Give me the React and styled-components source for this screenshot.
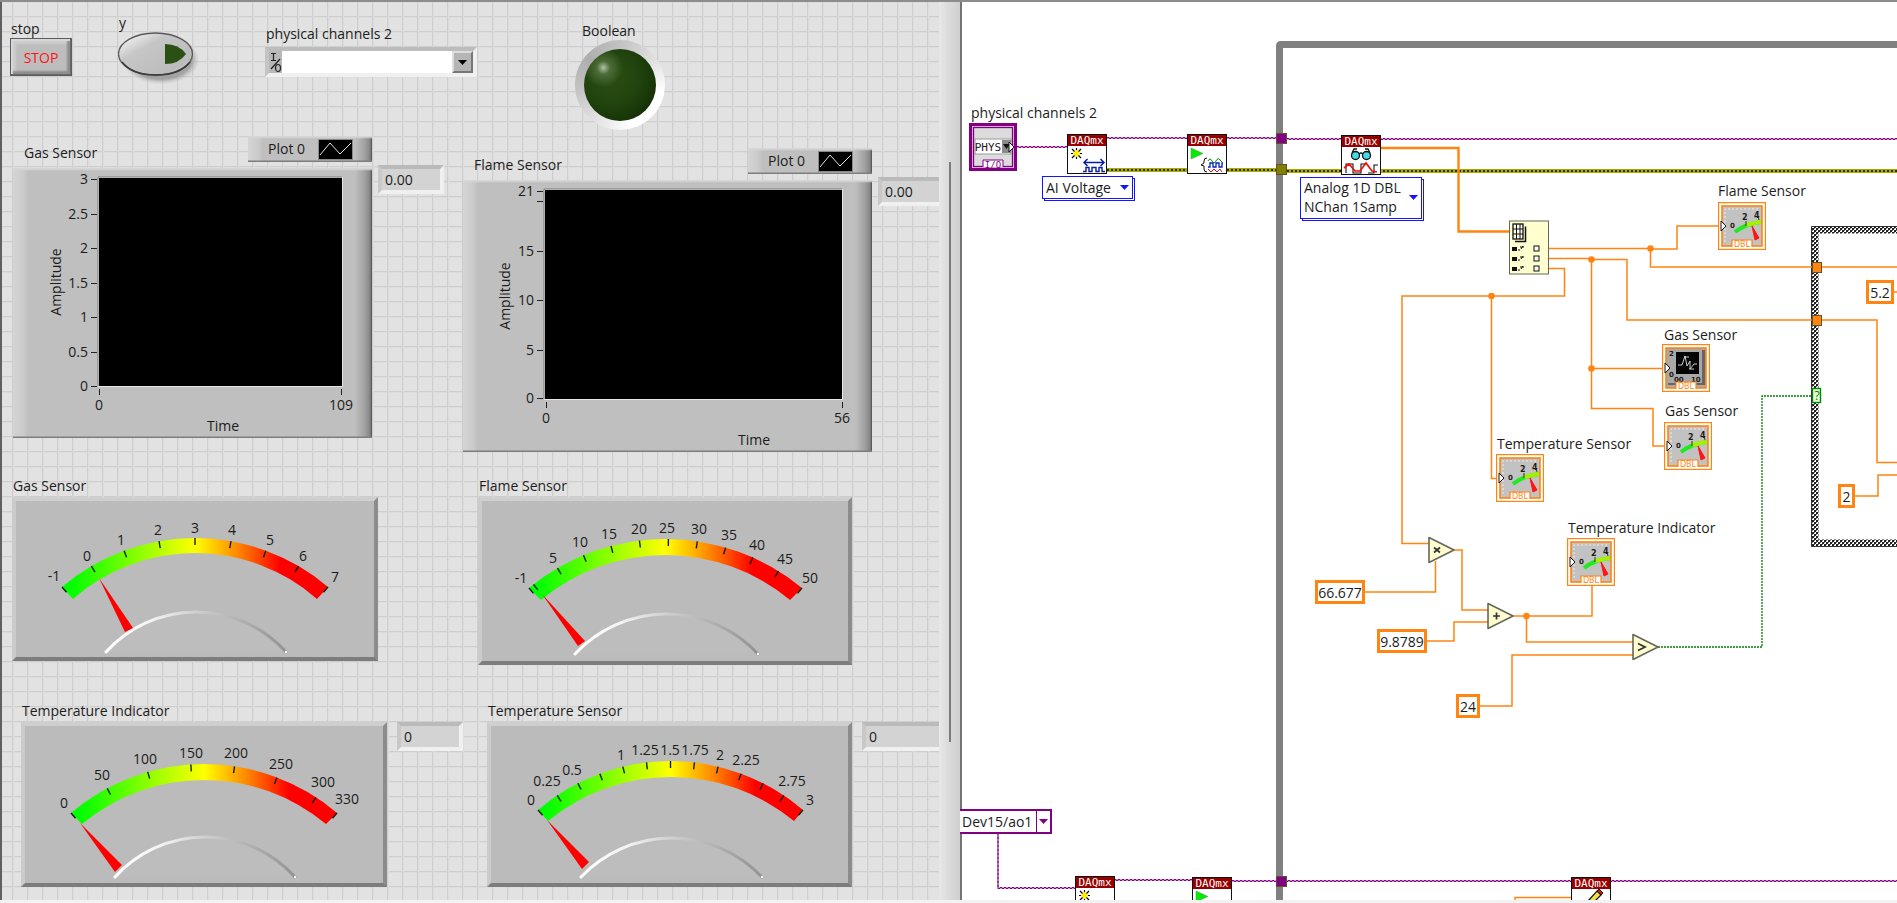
import React from "react";
import styled, { createGlobalStyle } from "styled-components";

const FONT = '"Open Sans", "Noto Sans", sans-serif';
const ORANGE = "#ff8410";
const PURPLE = "#820082";
const INK = "#1c1c1c";

const GlobalStyle = createGlobalStyle`
  *, *::before, *::after { box-sizing: border-box; }
  body {
    margin: 0;
    background: #fff;
    color: ${INK};
    font-family: ${FONT};
    font-size: 14px;
    line-height: 18px;
  }
  button, input, select { font: inherit; color: inherit; margin: 0; }
  svg { display: block; }
  svg text { font-family: ${FONT}; font-size: 14px; fill: ${INK}; }
`;

/* ---------- window frame ---------- */

const Workspace = styled.main`
  position: relative;
  display: grid;
  grid-template-columns: minmax(0, 960fr) minmax(0, 937fr);
  min-height: 100vh;
  overflow: hidden;

  &::before,
  &::after {
    content: "";
    position: absolute;
    left: 0;
    right: 0;
    z-index: 2;
  }
  &::before { top: 0; height: 2px; background: #8c8c8c; }
  &::after { bottom: 0; height: 3px; background: #f2f2f2; }
`;

const FrontPanel = styled.section`
  display: grid;
  grid-template-columns: minmax(0, 1fr) 21px;
  border-left: 2px solid #606060;
  min-width: 0;
`;

const PanelCanvas = styled.div`
  display: grid;
  grid-template-columns: 461px minmax(0, 1fr);
  grid-template-rows: 136px 341px 225px auto;
  overflow: hidden;
  background-color: #e2e2e2;
  background-image:
    linear-gradient(to right, #cecece 1px, #dddddd 1px, #dddddd 2px, transparent 2px),
    linear-gradient(to bottom, #cecece 1px, #dddddd 1px, #dddddd 2px, transparent 2px);
  background-size: 15px 15px;
  background-position: 10px 1px;
`;

const ScrollTrack = styled.div`
  display: flex;
  justify-content: center;
  padding-top: 162px;
  background: linear-gradient(to right, #e8e8e8, #dcdcdc 40%, #cfcfcf);
`;

const ScrollThumb = styled.div`
  width: 2px;
  height: 580px;
  background: #7b7b7b;
`;

/* ---------- front panel controls ---------- */

const Caption = styled.label`
  display: block;
  padding-left: 1px;
  line-height: 18px;
  white-space: nowrap;
`;

const ControlRow = styled.div`
  grid-column: 1 / -1;
  display: grid;
  grid-template-columns: 108px 147px 310px minmax(0, 1fr);
  padding-left: 8px;
`;

const Field = styled.div`
  display: flex;
  flex-direction: column;
  align-items: flex-start;
  padding-top: ${(p) => p.$top}px;
  gap: ${(p) => p.$gap || 0}px;
`;

const StopButton = styled.button`
  width: 62px;
  height: 38px;
  padding: 1px 0 0;
  border: 1px solid #5c5c5c;
  background: #bdbdbd;
  color: #ff1414;
  box-shadow:
    inset -1px -1px 0 #6a6a6a,
    inset 2px 2px 1px #d8d8d8,
    inset -4px -4px 2px #8d8d8d,
    inset 5px 5px 2px #cdcdcd;
`;

const OvalButton = styled.button`
  padding: 0;
  border: 0;
  background: none;
`;

const ChannelBox = styled.div`
  display: grid;
  grid-template-columns: 13px 191px;
  width: 212px;
  height: 30px;
  border-style: solid;
  border-width: 4px;
  border-color: #bcbcbc #f0f0f0 #f0f0f0 #c4c4c4;
  background: #b8b8b8;
`;

const SelectWrap = styled.div`
  position: relative;
  display: grid;
`;

const ChannelSelect = styled.select`
  appearance: none;
  border: 0;
  border-radius: 0;
  background: #fff;
  width: 100%;
  padding: 0 22px 0 4px;
`;

const DropMark = styled.span`
  position: absolute;
  top: 0;
  right: 0;
  bottom: 0;
  width: 21px;
  display: grid;
  place-items: center;
  background: #b5b5b5;
  border: 2px solid;
  border-color: #dedede #767676 #767676 #dedede;
  pointer-events: none;
`;

const LedCaption = styled(Caption)`
  padding-left: 7px;
`;

const Led = styled.div`
  width: 90px;
  height: 90px;
  padding: 9px;
  border-radius: 50%;
  background: conic-gradient(
    from 0deg,
    #c2c2c2 0deg,
    #dedede 50deg,
    #ffffff 100deg,
    #ffffff 165deg,
    #e2e2e2 215deg,
    #c0c0c0 270deg,
    #aeaeae 310deg,
    #c2c2c2 360deg
  );
`;

const LedLens = styled.div`
  height: 100%;
  border-radius: 50%;
  background:
    radial-gradient(circle at 27% 26%, rgba(200, 215, 190, 0.85) 0, rgba(120, 150, 100, 0.45) 9%, transparent 26%),
    radial-gradient(circle at 38% 40%, #2b4d14 0, #22450f 40%, #193808 66%, #0a1803 100%);
`;

/* ---------- charts and meters ---------- */

const Cell = styled.div`
  display: flex;
  align-items: flex-start;
  gap: ${(p) => p.$gap}px;
  padding-top: ${(p) => p.$top || 0}px;
  padding-left: ${(p) => p.$indent || 0}px;
`;

const Stack = styled.div`
  flex: none;
  display: flex;
  flex-direction: column;
`;

const ChartHeader = styled.div`
  display: flex;
  justify-content: space-between;
  align-items: flex-end;
  padding: 0 0 6px 10px;
`;

const bevelPlate = `
  background:
    linear-gradient(to top, #7d7d7d 1px, transparent 2px),
    linear-gradient(to bottom, #d6d6d6 1px, transparent 3px),
    linear-gradient(to right, #d4d4d4 0, #cbcbcb 10px, transparent 15px),
    linear-gradient(to left, #4e4e4e 0, #858585 2px, #a0a0a0 7px, transparent 17px),
    #bfbfbf;
`;

const Legend = styled.div`
  display: flex;
  align-items: center;
  gap: 13px;
  width: 124px;
  height: 26px;
  padding-left: 20px;
  ${bevelPlate}
`;

const ChartPlate = styled.figure`
  margin: 0;
  ${bevelPlate}
`;

const MeterPlate = styled.figure`
  margin: 2px 0 0;
  background: #bbb;
  border: 4px solid;
  border-color: #cfcfcf #8c8c8c #7d7d7d #cbcbcb;
  svg { margin: -4px; }
`;

const ReadoutColumn = styled.div`
  flex: none;
  padding-top: ${(p) => p.$top}px;
`;

const Readout = styled.output`
  display: block;
  width: ${(p) => p.$width || 66}px;
  height: 29px;
  padding: 2px 3px;
  border: 4px solid;
  border-color: #bababa #f0f0f0 #f0f0f0 #c8c8c8;
  background: #d3d3d3;
`;

function PlotLegend() {
  return (
    <Legend>
      <span>Plot 0</span>
      <svg width="35" height="21" aria-hidden="true">
        <rect width="35" height="21" fill="#8a8a8a" />
        <rect x="1" y="1" width="33" height="19" fill="#000" />
        <path d="M2 16L12 4L22 15L33 4" fill="none" stroke="#e4e4e4" strokeWidth="1" />
      </svg>
    </Legend>
  );
}

function Chart({ width, height, plot, yTicks, xTicks, amplitude, time }) {
  const [x0, y0, x1, y1] = plot;
  return (
    <svg width={width} height={height}>
      <rect x={x0 - 1} y={y0 - 1} width={x1 - x0 + 2} height={y1 - y0 + 2} fill="#e6e6e6" />
      <path d={`M${x0 - 1} ${y1}V${y0 - 1}H${x1}`} fill="none" stroke="#7a7a7a" />
      <rect x={x0} y={y0} width={x1 - x0} height={y1 - y0} />
      {yTicks.map(([label, y]) => (
        <g key={y}>
          <path d={`M${x0 - 8} ${y + 0.5}h6`} stroke="#222" />
          <text x={x0 - 11} y={y + 5} textAnchor="end">{label}</text>
        </g>
      ))}
      {xTicks.map(([label, x]) => (
        <g key={x}>
          <path d={`M${x + 0.5} ${y1 + 3}v6`} stroke="#222" />
          <text x={x} y={y1 + 24} textAnchor="middle">{label}</text>
        </g>
      ))}
      <text textAnchor="middle" transform={`translate(${amplitude[0]} ${amplitude[1]}) rotate(-90)`}>
        Amplitude
      </text>
      <text x={time[0]} y={time[1]}>Time</text>
    </svg>
  );
}

function ChartBlock({ title, value, top, indent, readoutWidth, chart }) {
  return (
    <Cell $top={top} $indent={indent} $gap={6}>
      <Stack>
        <ChartHeader>
          <Caption as="span">{title}</Caption>
          <PlotLegend />
        </ChartHeader>
        <ChartPlate aria-label={`${title} chart`}>
          <Chart {...chart} />
        </ChartPlate>
      </Stack>
      <ReadoutColumn $top={29}>
        <Readout $width={readoutWidth}>{value}</Readout>
      </ReadoutColumn>
    </Cell>
  );
}

const arcRadius = (half, sag) => (half * half + sag * sag) / (2 * sag);

function arc([xl, xr, yEnd, yTop]) {
  return arcRadius((xr - xl) / 2, yEnd - yTop);
}

function Meter({ id, width, height, outer, inner, hub, needle, ticks, labels }) {
  const [xl, xr, yEnd, yTop] = outer;
  const R = arc(outer);
  const r = arc(inner);
  const h = arc(hub);
  const cx = (xl + xr) / 2;
  const cy = yTop + R;
  const span = Math.asin((xr - xl) / 2 / R);
  return (
    <svg width={width} height={height}>
      <defs>
        <linearGradient id={`${id}-scale`}>
          <stop offset="0.03" stopColor="#00ff00" />
          <stop offset="0.5" stopColor="#ffff00" />
          <stop offset="0.66" stopColor="#ff8800" />
          <stop offset="0.82" stopColor="#ff0000" />
        </linearGradient>
        <linearGradient id={`${id}-hub`}>
          <stop offset="0" stopColor="#ffffff" />
          <stop offset="0.25" stopColor="#f4f4f4" />
          <stop offset="0.5" stopColor="#cfcfcf" />
          <stop offset="1" stopColor="#929292" />
        </linearGradient>
      </defs>
      <path
        d={`M${xl} ${yEnd}A${R} ${R} 0 0 1 ${xr} ${yEnd}L${inner[1]} ${inner[2]}A${r} ${r} 0 0 0 ${inner[0]} ${inner[2]}Z`}
        fill={`url(#${id}-scale)`}
      />
      {ticks.map((f) => {
        const a = (f * 2 - 1) * span;
        const s = Math.sin(a);
        const c = Math.cos(a);
        return (
          <path
            key={f}
            d={`M${cx + R * s} ${cy - R * c}L${cx + (R - 7) * s} ${cy - (R - 7) * c}`}
            stroke="#10200c"
            strokeWidth="1.4"
          />
        );
      })}
      {labels.map(([text, x, y]) => (
        <text key={text} x={x} y={y + 5} textAnchor="middle">{text}</text>
      ))}
      <path
        d={`M${hub[0]} ${hub[2]}A${h} ${h} 0 0 1 ${hub[1]} ${hub[2]}`}
        fill="#bdbdbd"
        stroke={`url(#${id}-hub)`}
        strokeWidth="3"
        strokeLinecap="round"
      />
      <circle cx={hub[1]} cy={hub[2]} r="1.2" fill="#fff" />
      <polygon points={needle} fill="#ff0000" />
    </svg>
  );
}

function MeterBlock({ title, value, indent, readoutWidth, meter }) {
  return (
    <Cell $indent={indent} $gap={10}>
      <Stack>
        <Caption as="span">{title}</Caption>
        <MeterPlate aria-label={`${title} meter`}>
          <Meter {...meter} />
        </MeterPlate>
      </Stack>
      {value !== undefined && (
        <ReadoutColumn $top={20}>
          <Readout $width={readoutWidth}>{value}</Readout>
        </ReadoutColumn>
      )}
    </Cell>
  );
}

const gasChart = {
  width: 359, height: 270, plot: [86, 10, 329, 218],
  yTicks: [["3", 11], ["2.5", 46], ["2", 80], ["1.5", 115], ["1", 149], ["0.5", 184], ["0", 218]],
  xTicks: [["0", 86], ["109", 328]],
  amplitude: [48, 114], time: [194, 263],
};

const flameChart = {
  width: 409, height: 272, plot: [82, 10, 379, 219],
  yTicks: [["21", 11], ["", 21], ["15", 71], ["10", 120], ["5", 170], ["0", 218]],
  xTicks: [["0", 83], ["56", 379]],
  amplitude: [47, 116], time: [275, 265],
};

const gasMeter = {
  id: "gas", width: 366, height: 164,
  outer: [50, 316, 90, 41], inner: [61, 305, 102, 56], hub: [94, 274, 155, 115],
  needle: "87,81 113,135 121,131",
  ticks: [0, 1, 2, 3, 4, 5, 6, 7, 8].map((n) => n / 8),
  labels: [["-1", 42, 79], ["0", 75, 59], ["1", 109, 43], ["2", 146, 33], ["3", 183, 31], ["4", 220, 33], ["5", 258, 43], ["6", 291, 59], ["7", 323, 80]],
};

const flameMeter = {
  id: "flame", width: 374, height: 168,
  outer: [51, 324, 91, 42], inner: [63, 312, 103, 58], hub: [97, 280, 157, 117],
  needle: "64,97 100,149 107,144",
  ticks: [-1, 0, 5, 10, 15, 20, 25, 30, 35, 40, 45, 50].map((v) => (v + 1) / 51),
  labels: [["-1", 43, 81], ["5", 75, 61], ["10", 102, 45], ["15", 131, 37], ["20", 161, 32], ["25", 189, 31], ["30", 221, 32], ["35", 251, 38], ["40", 279, 48], ["45", 307, 62], ["50", 332, 81]],
};

const indicatorMeter = {
  id: "indicator", width: 366, height: 165,
  outer: [50, 316, 91, 42], inner: [61, 305, 102, 58], hub: [94, 274, 155, 115],
  needle: "59,101 94,150 101,143",
  ticks: [0, 50, 100, 150, 200, 250, 300, 330].map((v) => v / 330),
  labels: [["0", 43, 81], ["50", 81, 53], ["100", 124, 37], ["150", 170, 31], ["200", 215, 31], ["250", 260, 42], ["300", 302, 60], ["330", 326, 77]],
};

const temperatureMeter = {
  id: "temperature", width: 365, height: 165,
  outer: [51, 316, 88, 39], inner: [61, 307, 99, 55], hub: [94, 275, 155, 116],
  needle: "60,98 95,147 102,140",
  ticks: [0, 1, 2, 3, 4, 5, 6, 7, 8, 9, 10, 11, 12].map((n) => n / 12),
  labels: [["0", 44, 78], ["0.25", 60, 59], ["0.5", 85, 48], ["1", 134, 33], ["1.25", 158, 28], ["1.5", 183, 28], ["1.75", 208, 28], ["2", 233, 33], ["2.25", 259, 38], ["2.75", 305, 59], ["3", 323, 78]],
};

/* ---------- block diagram ---------- */

const Diagram = styled.section`
  position: relative;
  overflow: hidden;
  min-width: 0;
  min-height: 100%;
  background: #fff;
  box-shadow: inset 2px 0 0 #747474;
`;

const Wires = styled.svg`
  position: absolute;
  inset: 0;
  width: 100%;
  height: 100%;
`;

const Node = styled.div`
  position: absolute;
  left: ${(p) => p.$x}px;
  top: ${(p) => p.$y}px;
  white-space: nowrap;
`;

const Constant = styled.input`
  display: block;
  width: ${(p) => p.$width}px;
  height: 24px;
  padding: 0;
  border: 3px solid ${ORANGE};
  background: #fff;
  text-align: center;
`;

const PolySelector = styled.div`
  position: relative;
  border: 1px solid #1414ff;
  background: #fff;
  box-shadow: 2px 2px 0 -1px #fff, 2px 2px 0 #1414ff;
`;

const PolySelect = styled.select`
  display: block;
  appearance: none;
  border: 0;
  border-radius: 0;
  background: none;
  width: 89px;
  height: 21px;
  padding: 0 18px 0 3px;
`;

const PolyButton = styled.button`
  display: block;
  border: 0;
  background: none;
  width: 120px;
  height: 40px;
  padding: 0 20px 2px 3px;
  line-height: 19px;
  text-align: left;
  white-space: pre-line;
`;

const Mark = styled.svg`
  position: absolute;
  right: 3px;
  top: calc(50% - 3px);
  pointer-events: none;
`;

const DeviceBox = styled.div`
  display: grid;
  grid-template-columns: 77px 13px;
  height: 25px;
  border: 2px solid ${PURPLE};
  border-left: 0;
  background: #fff;
`;

const DeviceSelect = styled.select`
  appearance: none;
  border: 0;
  border-radius: 0;
  border-right: 1px solid ${PURPLE};
  background: none;
  padding: 0 0 0 2px;
`;

const DeviceMark = styled.span`
  display: grid;
  place-items: center;
`;

function DownMark({ color }) {
  return (
    <svg width="9" height="5" viewBox="0 0 9 5" aria-hidden="true">
      <path d="M0 0H9L4.5 5Z" fill={color} />
    </svg>
  );
}

const mono = { fontFamily: '"DejaVu Sans Mono", monospace', fontSize: 11 };

const glyphs = {
  create: (
    <>
      <path d="M9.500 14v11M4 19.500h11M5 15l9 9M14 15l-9 9" stroke="#000" strokeWidth="1.200" />
      <circle cx="9.500" cy="19.500" r="2.800" fill="#ffee00" />
      <path d="M9.500 16v7M6 19.500h7" stroke="#ffee00" strokeWidth="1.500" />
      <path d="M18 28.500h18M20.500 25l-3.500 3.500l3.500 3.500M33.500 25l3.500 3.500l-3.500 3.500" stroke="#0a1fa0" strokeWidth="1.500" fill="none" />
      <path d="M16 37.500h3v-4h3v4h3v-4h4v4h3v-4h3v4h3" stroke="#0a1fa0" strokeWidth="1.400" fill="none" />
    </>
  ),
  start: (
    <>
      <path d="M4 14L16 19.500L4 25Z" fill="#00ee00" stroke="#5a9a5a" strokeWidth="0.600" />
      <path d="M20 24q-3 0-3 3v2l-3 2l3 1v3q0 3 3 3" stroke="#111" fill="none" />
      <path d="M21 27q2-4 4 0t4 0t4-1l2 2" stroke="#0a8a0a" fill="none" />
      <path d="M21 33h2v-4h3v4h3v-4h3v4h3v-4h1" stroke="#0a1fc0" strokeWidth="1.300" fill="none" />
      <path d="M21 35l3 3l3-3l3 3l3-3l2 3" stroke="#e01010" fill="none" />
    </>
  ),
  read: (
    <>
      <path d="M11 18l2-4h3M29 18l-2-4h-3M18 19q2-2 4 0" stroke="#111" strokeWidth="1.300" fill="none" />
      <circle cx="14.500" cy="20.500" r="4" fill="#43d9e6" stroke="#111" strokeWidth="1.300" />
      <circle cx="25.500" cy="20.500" r="4" fill="#43d9e6" stroke="#111" strokeWidth="1.300" />
      <path d="M5 38V29h7v9h8v-9h5M27 38h6v-8h4" stroke="#111" strokeWidth="1.100" fill="none" />
      <path d="M3 33l5-4l6 7h5l6-8l6 8l5 1" stroke="#f01010" strokeWidth="1.700" fill="none" />
    </>
  ),
  write: (
    <>
      <path d="M17 24l9-10l4 4l-9 9l-5 3Z" fill="#f4e04a" stroke="#111" strokeWidth="1.200" />
      <path d="M26 14l2-2l4 4l-2 2Z" fill="#d01515" stroke="#111" />
      <path d="M16 30l1-5l4 2Z" fill="#111" />
    </>
  ),
};

function DaqNode({ x, y, kind }) {
  return (
    <Node $x={x} $y={y}>
      <svg width="40" height="40" aria-label={`DAQmx ${kind}`} role="img">
        <rect x="0.500" y="0.500" width="39" height="39" fill="#fff" stroke="#111" />
        <rect x="1" y="1" width="38" height="11" fill="#960000" />
        <text x="20" y="10" textAnchor="middle" style={{ ...mono, fill: "#fff" }}>
          DAQmx
        </text>
        {glyphs[kind]}
      </svg>
    </Node>
  );
}

const tiny = { fontFamily: '"DejaVu Sans", sans-serif', fontSize: 7, fontWeight: 700 };
const small = { ...tiny, fontSize: 8 };

function DblTerminal({ x, y, chart }) {
  return (
    <Node $x={x} $y={y}>
      <svg width="48" height="48" aria-hidden="true">
        <rect x="0.500" y="0.500" width="47" height="47" fill="#fff" stroke={ORANGE} strokeWidth="1.400" />
        <rect x="4" y="4" width="40" height="40" fill={chart ? "#a9a9a9" : "#c2c2c2"} stroke={ORANGE} strokeWidth="1.600" />
        {chart ? (
          <>
            <path d="M40 6h3v35H6v-2h34Z" fill="#666" />
            <rect x="14" y="8" width="23" height="22" fill="#050505" />
            <path d="M16 21h4l3-9l2 10l3-5v8l4-5h3M22 13h5M27 25h5" stroke="#ddd" fill="none" strokeWidth="0.900" />
            <text x="7" y="12" style={tiny}>2</text>
            <text x="7" y="33" style={tiny}>0</text>
            <text x="12" y="38" style={tiny}>00</text>
            <text x="29" y="38" style={tiny}>10</text>
          </>
        ) : (
          <>
            <path d="M7 40V7H42" stroke="#eee" strokeDasharray="2 2" fill="none" />
            <path d="M17 30q10-8 26-10" stroke="#1eea1e" strokeWidth="4" fill="none" />
            <path d="M28 23q7-2 15-3" stroke="#a5f200" strokeWidth="4" fill="none" />
            <path d="M34 24l7 12l-4 2Z" fill="#ff1414" stroke="#ff1414" />
            <path d="M28 19v5M40 14l1 4" stroke="#333" />
            <text x="12" y="26" style={tiny}>0</text>
            <text x="24" y="18" style={small}>2</text>
            <text x="36" y="16" style={small}>4</text>
          </>
        )}
        <path d="M3 19v10l5-5Z" fill="#fff" stroke="#111" />
        <path d="M14 45V38H34V45" fill="#fff" stroke={ORANGE} strokeWidth="1.200" />
        <text x="24" y="45" textAnchor="middle" style={{ ...small, fontWeight: 400, fill: ORANGE }}>DBL</text>
      </svg>
    </Node>
  );
}

function PhysTerminal({ x, y }) {
  return (
    <Node $x={x} $y={y}>
      <svg width="48" height="48" aria-hidden="true">
        <rect x="1.500" y="1.500" width="45" height="45" fill="#e2c8e2" stroke={PURPLE} strokeWidth="3" />
        <rect x="4.500" y="4.500" width="39" height="39" fill="#dcdcdc" stroke={PURPLE} strokeWidth="1.300" />
        <rect x="6" y="16" width="36" height="15" fill="#fff" stroke="#999" />
        <rect x="33" y="17" width="9" height="13" fill="#8b8b8b" />
        <path d="M34 21h7l-3.500 5Z" fill="#111" />
        <text x="19" y="28" textAnchor="middle" style={mono}>PHYS</text>
        <path d="M40 19v10l5-5Z" fill="#fff" stroke="#111" />
        <path d="M14 44V37H34V44" fill="#fff" stroke={PURPLE} />
        <text x="24" y="45" textAnchor="middle" style={{ ...mono, fontSize: 9, fill: PURPLE }}>I/O</text>
      </svg>
    </Node>
  );
}

function TaskWire({ d }) {
  return (
    <g fill="none" stroke={PURPLE} strokeWidth="1">
      <path d={d} strokeWidth="2" strokeOpacity="0.4" />
      <path d={d} strokeDasharray="2 2" transform="translate(0 -0.5)" />
      <path d={d} strokeDasharray="2 2" strokeDashoffset="2" transform="translate(0 0.5)" />
    </g>
  );
}

function ErrorWire({ d }) {
  return (
    <g fill="none">
      <path d={d} stroke="#adad00" strokeWidth="4" />
      <path d={d} stroke="#2e2e00" strokeWidth="2" strokeDasharray="2 2" />
    </g>
  );
}

const dataWires = [
  "M588 248.500H690.500V249H717V226H758",
  "M690.500 248.500V267H852M862 267H2400",
  "M588 258.500H631.500V259.500H667V320H852M862 320H917V462.500H2400",
  "M631.500 259.500V408.500H693V446H704",
  "M631.500 368.500H703",
  "M588 268.500H604.500V296H442V543.500H469",
  "M531.500 296V478.500H537",
  "M494 550H502V610H528",
  "M405 592H475.500V561",
  "M467 641H494V622H528",
  "M553 616H632V585",
  "M566.500 616V642H673",
  "M520 706H552V655H673",
  "M934 292H2400",
  "M895 496H918V475H2400",
  "M555 903V897.500H611",
];

const junctions = [[690.5, 248.5], [631.5, 259.5], [631.5, 368.5], [531.5, 296], [566.5, 616]];

function Operator({ x, y, children }) {
  return (
    <g transform={`translate(${x} ${y})`}>
      <path d="M1 0.500L26 13L1 25.500Z" fill="#ffffd0" stroke="#66665a" strokeWidth="1.600" strokeLinejoin="round" />
      {children}
    </g>
  );
}

function WireLayer() {
  return (
    <Wires aria-hidden="true">
      <defs>
        <pattern id="case-hatch" width="4" height="4" patternUnits="userSpaceOnUse">
          <rect width="4" height="4" fill="#fff" />
          <path d="M0 0h2v2h-2zM2 2h2v2h-2z" fill="#222" />
          <path d="M2 0h1v1h-1zM0 2h1v1h-1z" fill="#777" />
        </pattern>
      </defs>

      <path d="M319.500 4000V46Q319.500 44.500 321 44.500H2400" fill="none" stroke="#808080" strokeWidth="7" />

      <path d="M2400 230H855V543H2400" fill="none" stroke="url(#case-hatch)" strokeWidth="7" />
      <path d="M2400 226.500H851.500V546.500H2400" fill="none" stroke="#333" strokeWidth="1" />

      <TaskWire d="M57 147H108" />
      <TaskWire d="M147 138H316" />
      <TaskWire d="M327 139H2400" />
      <TaskWire d="M38 834V888H115" />
      <TaskWire d="M154 880H232" />
      <TaskWire d="M272 881H2400" />
      <ErrorWire d="M147 170H316" />
      <ErrorWire d="M327 171H2400" />

      <path d="M421 148H498.500V231.500H549" fill="none" stroke={ORANGE} strokeWidth="2.400" />
      {dataWires.map((d) => (
        <path key={d} d={d} fill="none" stroke={ORANGE} strokeWidth="1.500" />
      ))}
      {junctions.map(([x, y]) => (
        <circle key={`${x}-${y}`} cx={x} cy={y} r="3.300" fill={ORANGE} />
      ))}
      <path d="M698 647H802V396H852" fill="none" stroke="#008000" strokeWidth="1.300" strokeDasharray="2 1" />

      <g stroke="#66502a">
        <rect x="316.500" y="133.500" width="10" height="10" fill={PURPLE} />
        <rect x="316.500" y="164.500" width="10" height="10" fill="#808000" />
        <rect x="316.500" y="876.500" width="10" height="10" fill={PURPLE} />
        <rect x="852.500" y="262.500" width="9" height="10" fill={ORANGE} />
        <rect x="852.500" y="315.500" width="9" height="10" fill={ORANGE} />
      </g>
      <rect x="852.500" y="388.500" width="8" height="14" fill="#e8ffd8" stroke="#008a00" strokeWidth="1.400" />
      <text x="857" y="400" textAnchor="middle" style={{ fontSize: 12, fill: "#008000" }}>?</text>

      <g>
        <rect x="549.500" y="221" width="39" height="53" fill="#ffffd0" stroke="#66665a" />
        <path d="M555 241.500H565.500V226.500" fill="none" stroke="#111" strokeWidth="1.500" />
        <rect x="553" y="224" width="10" height="15" fill="#fffff0" stroke="#111" strokeWidth="1.300" />
        <path d="M553 229h10M553 234h10M556.500 224v15M560 224v15" stroke="#111" />
        {[248, 258, 268].map((y) => (
          <g key={y}>
            <rect x="552" y={y - 1} width="5" height="4" fill="#111" />
            <path d={`M558 ${y + 2}h2M561 ${y + 1}l2-3M560 ${y - 1}h4`} stroke="#111" fill="none" />
            <rect x="574" y={y - 2} width="5" height="5" fill="#fffff0" stroke="#111" />
          </g>
        ))}
      </g>

      <Operator x={468} y={537}>
        <path d="M6 10.500l6 5M12 10.500l-6 5" stroke="#333" strokeWidth="1.700" />
      </Operator>
      <Operator x={527} y={603}>
        <path d="M6 13h7M9.500 9.500v7" stroke="#333" strokeWidth="1.700" />
      </Operator>
      <Operator x={672} y={634}>
        <path d="M6 9.500l7 3.500l-7 3.500" stroke="#333" strokeWidth="1.800" fill="none" />
      </Operator>
    </Wires>
  );
}

const nodeLabels = [
  ["physical channels 2", 11, 104],
  ["Flame Sensor", 758, 182],
  ["Gas Sensor", 704, 326],
  ["Gas Sensor", 705, 402],
  ["Temperature Sensor", 537, 435],
  ["Temperature Indicator", 608, 519],
];

const constants = [
  ["66.677", 355, 580, 50],
  ["9.8789", 417, 629, 50],
  ["24", 496, 694, 24],
  ["5.2", 906, 280, 28],
  ["2", 878, 484, 17],
];

export default function App() {
  return (
    <>
      <GlobalStyle />
      <Workspace>
        <FrontPanel aria-label="Front panel">
          <PanelCanvas>
            <ControlRow>
              <Field $top={20}>
                <Caption htmlFor="stop">stop</Caption>
                <StopButton id="stop" type="button">STOP</StopButton>
              </Field>
              <Field $top={14}>
                <Caption htmlFor="y">y</Caption>
                <OvalButton id="y" type="button">
                  <svg width="84" height="54" aria-hidden="true">
                    <defs>
                      <linearGradient id="oval-face" x1="0" y1="0" x2="1" y2="1">
                        <stop offset="0.08" stopColor="#f4f4f4" />
                        <stop offset="0.35" stopColor="#c6c6c6" />
                        <stop offset="0.8" stopColor="#bcbcbc" />
                        <stop offset="1" stopColor="#e2e2e2" />
                      </linearGradient>
                      <radialGradient id="oval-shade">
                        <stop offset="0.8" stopColor="#8f8f8f" stopOpacity="0.75" />
                        <stop offset="1" stopColor="#bdbdbd" stopOpacity="0.1" />
                      </radialGradient>
                    </defs>
                    <ellipse cx="43" cy="28" rx="38" ry="24" fill="url(#oval-shade)" />
                    <ellipse cx="37.500" cy="22" rx="37" ry="21" fill="url(#oval-face)" stroke="#5a5a5a" strokeWidth="1.300" />
                    <path d="M4 30Q14 43 38 43Q62 43 72 30" fill="none" stroke="#3a3a3a" strokeWidth="1.600" />
                    <path d="M47 12Q61 12 68 22Q61 32 47 32Z" fill="#2a5014" />
                  </svg>
                </OvalButton>
              </Field>
              <Field $top={25} $gap={4}>
                <Caption htmlFor="channels">physical channels 2</Caption>
                <ChannelBox>
                  <svg width="13" height="22" aria-hidden="true">
                    <path d="M2 2.500h5M4.500 2.500v7M2 9.500h5M2 18L11 8" stroke="#222" strokeWidth="1.200" fill="none" />
                    <ellipse cx="9" cy="17" rx="2.500" ry="3.500" fill="none" stroke="#222" strokeWidth="1.200" />
                  </svg>
                  <SelectWrap>
                    <ChannelSelect id="channels" defaultValue="">
                      <option value="" />
                    </ChannelSelect>
                    <DropMark><DownMark color="#000" /></DropMark>
                  </SelectWrap>
                </ChannelBox>
              </Field>
              <Field $top={22}>
                <LedCaption as="span" id="boolean-caption">Boolean</LedCaption>
                <Led role="img" aria-labelledby="boolean-caption"><LedLens /></Led>
              </Field>
            </ControlRow>

            <ChartBlock title="Gas Sensor" value="0.00" indent={11} chart={gasChart} />
            <ChartBlock title="Flame Sensor" value="0.00" top={12} readoutWidth={80} chart={flameChart} />
            <MeterBlock title="Gas Sensor" indent={10} meter={gasMeter} />
            <MeterBlock title="Flame Sensor" indent={15} meter={flameMeter} />
            <MeterBlock title="Temperature Indicator" value="0" indent={19} meter={indicatorMeter} />
            <MeterBlock title="Temperature Sensor" value="0" indent={24} readoutWidth={96} meter={temperatureMeter} />
          </PanelCanvas>
          <ScrollTrack><ScrollThumb /></ScrollTrack>
        </FrontPanel>

        <Diagram aria-label="Block diagram">
          <WireLayer />
          <PhysTerminal x={9} y={123} />
          <DaqNode x={107} y={134} kind="create" />
          <DaqNode x={227} y={134} kind="start" />
          <DaqNode x={381} y={135} kind="read" />
          <DaqNode x={115} y={876} kind="create" />
          <DaqNode x={232} y={877} kind="start" />
          <DaqNode x={611} y={877} kind="write" />

          <DblTerminal x={758} y={202} />
          <DblTerminal x={702} y={344} chart />
          <DblTerminal x={704} y={422} />
          <DblTerminal x={536} y={454} />
          <DblTerminal x={607} y={538} />

          {nodeLabels.map(([text, x, y]) => (
            <Node key={`${text}-${y}`} $x={x} $y={y}>{text}</Node>
          ))}

          {constants.map(([value, x, y, width]) => (
            <Node key={value} $x={x} $y={y}>
              <Constant $width={width} value={value} readOnly aria-label={`Constant ${value}`} />
            </Node>
          ))}

          <Node $x={82} $y={176}>
            <PolySelector>
              <PolySelect aria-label="Create channel type" defaultValue="AI Voltage">
                <option>AI Voltage</option>
              </PolySelect>
              <Mark width="9" height="5"><path d="M0 0H9L4.500 5Z" fill="#1414ff" /></Mark>
            </PolySelector>
          </Node>
          <Node $x={340} $y={177}>
            <PolySelector>
              <PolyButton type="button">{"Analog 1D DBL\nNChan 1Samp"}</PolyButton>
              <Mark width="9" height="5"><path d="M0 0H9L4.500 5Z" fill="#1414ff" /></Mark>
            </PolySelector>
          </Node>
          <Node $x={0} $y={809}>
            <DeviceBox>
              <DeviceSelect aria-label="Output channel" defaultValue="Dev15/ao1">
                <option>Dev15/ao1</option>
              </DeviceSelect>
              <DeviceMark><DownMark color={PURPLE} /></DeviceMark>
            </DeviceBox>
          </Node>
        </Diagram>
      </Workspace>
    </>
  );
}
